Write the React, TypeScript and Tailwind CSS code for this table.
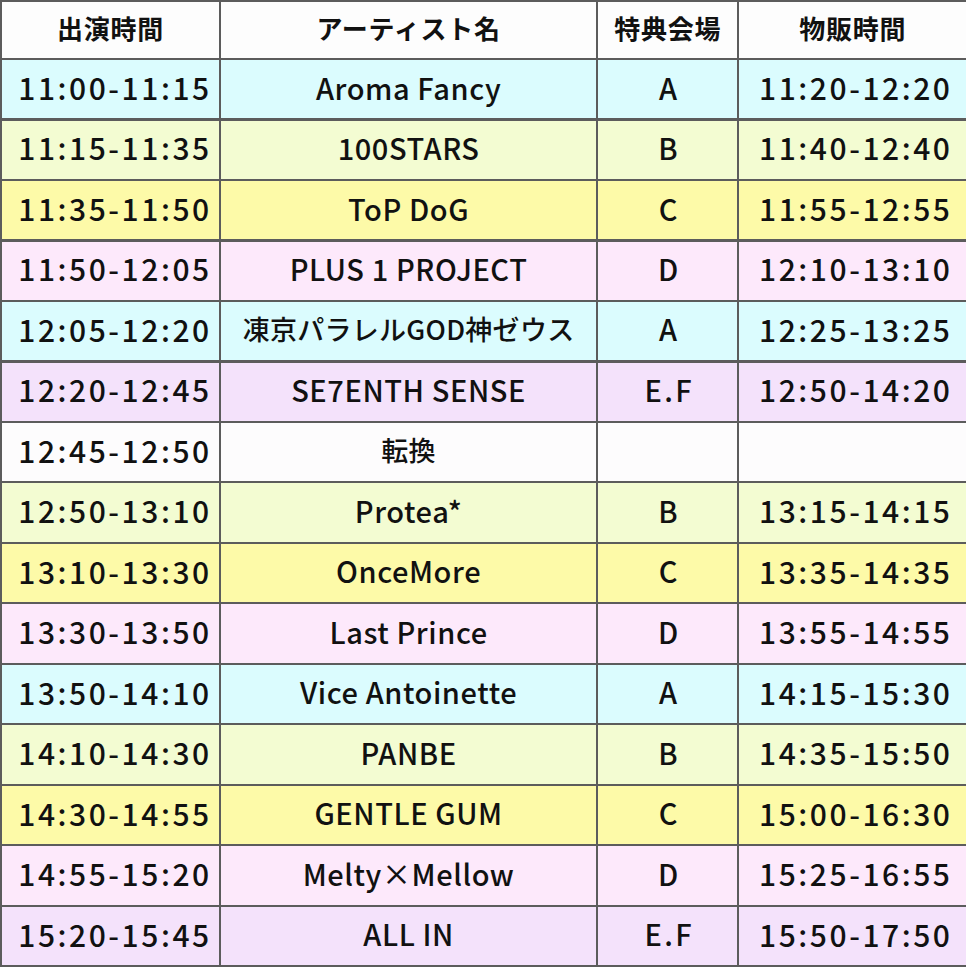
const rows = [
  { time: "11:00-11:15", name: "Aroma Fancy", venue: "A", sale: "11:20-12:20", bg: "bg-[#dbfcfe]" },
  { time: "11:15-11:35", name: "100STARS", venue: "B", sale: "11:40-12:40", bg: "bg-[#f3fcd2]" },
  { time: "11:35-11:50", name: "ToP DoG", venue: "C", sale: "11:55-12:55", bg: "bg-[#fdfaa8]" },
  { time: "11:50-12:05", name: "PLUS 1 PROJECT", venue: "D", sale: "12:10-13:10", bg: "bg-[#fde9fb]" },
  { time: "12:05-12:20", name: "凍京パラレルGOD神ゼウス", venue: "A", sale: "12:25-13:25", bg: "bg-[#dbfcfe]", cjk: true },
  { time: "12:20-12:45", name: "SE7ENTH SENSE", venue: "E.F", sale: "12:50-14:20", bg: "bg-[#f4e2fb]" },
  { time: "12:45-12:50", name: "転換", venue: "", sale: "", bg: "bg-[#fdfcfd]", cjk: true },
  { time: "12:50-13:10", name: "Protea*", venue: "B", sale: "13:15-14:15", bg: "bg-[#f3fcd2]" },
  { time: "13:10-13:30", name: "OnceMore", venue: "C", sale: "13:35-14:35", bg: "bg-[#fdfaa8]" },
  { time: "13:30-13:50", name: "Last Prince", venue: "D", sale: "13:55-14:55", bg: "bg-[#fde9fb]" },
  { time: "13:50-14:10", name: "Vice Antoinette", venue: "A", sale: "14:15-15:30", bg: "bg-[#dbfcfe]" },
  { time: "14:10-14:30", name: "PANBE", venue: "B", sale: "14:35-15:50", bg: "bg-[#f3fcd2]" },
  { time: "14:30-14:55", name: "GENTLE GUM", venue: "C", sale: "15:00-16:30", bg: "bg-[#fdfaa8]" },
  { time: "14:55-15:20", name: "Melty×Mellow", venue: "D", sale: "15:25-16:55", bg: "bg-[#fde9fb]" },
  { time: "15:20-15:45", name: "ALL IN", venue: "E.F", sale: "15:50-17:50", bg: "bg-[#f4e2fb]" },
];

const font = { fontFamily: '"Noto Sans CJK JP", "Noto Sans", sans-serif' };

export default function App() {
  return (
    <div className="w-[966px] h-[968px] overflow-hidden bg-white" style={font}>
      <div className="grid grid-cols-[217px_375px_139px_227px] grid-rows-[56px] auto-rows-[58.4px] gap-[2.1px] bg-[#5c5c5c] pl-[2px] pt-[2px] pb-[2px] text-[#111]">
        {["出演時間", "アーティスト名", "特典会場", "物販時間"].map((h) => (
          <div key={h} className="flex items-center justify-center pb-[5px] bg-[#fdfdfd] text-[26px] font-bold tracking-[0.03em]">
            {h}
          </div>
        ))}
        {rows.map((r) => (
          <>
            <div key={r.time + "a"} className={`flex items-center justify-center pl-[9px] pb-[4px] text-[30px] font-medium tracking-[0.085em] ${r.bg}`}>
              {r.time}
            </div>
            <div
              key={r.time + "b"}
              className={`flex items-center justify-center pb-[4px] font-medium ${r.cjk ? "text-[27px] tracking-[0.01em]" : "text-[29px] tracking-[0.02em]"} ${r.bg}`}
            >
              {r.name}
            </div>
            <div key={r.time + "c"} className={`flex items-center justify-center pl-[3px] pb-[4px] text-[29px] font-medium tracking-[0.08em] ${r.bg}`}>
              {r.venue}
            </div>
            <div key={r.time + "d"} className={`flex items-center justify-center pl-[6px] pb-[4px] text-[30px] font-medium tracking-[0.085em] ${r.bg}`}>
              {r.sale}
            </div>
          </>
        ))}
      </div>
    </div>
  );
}
